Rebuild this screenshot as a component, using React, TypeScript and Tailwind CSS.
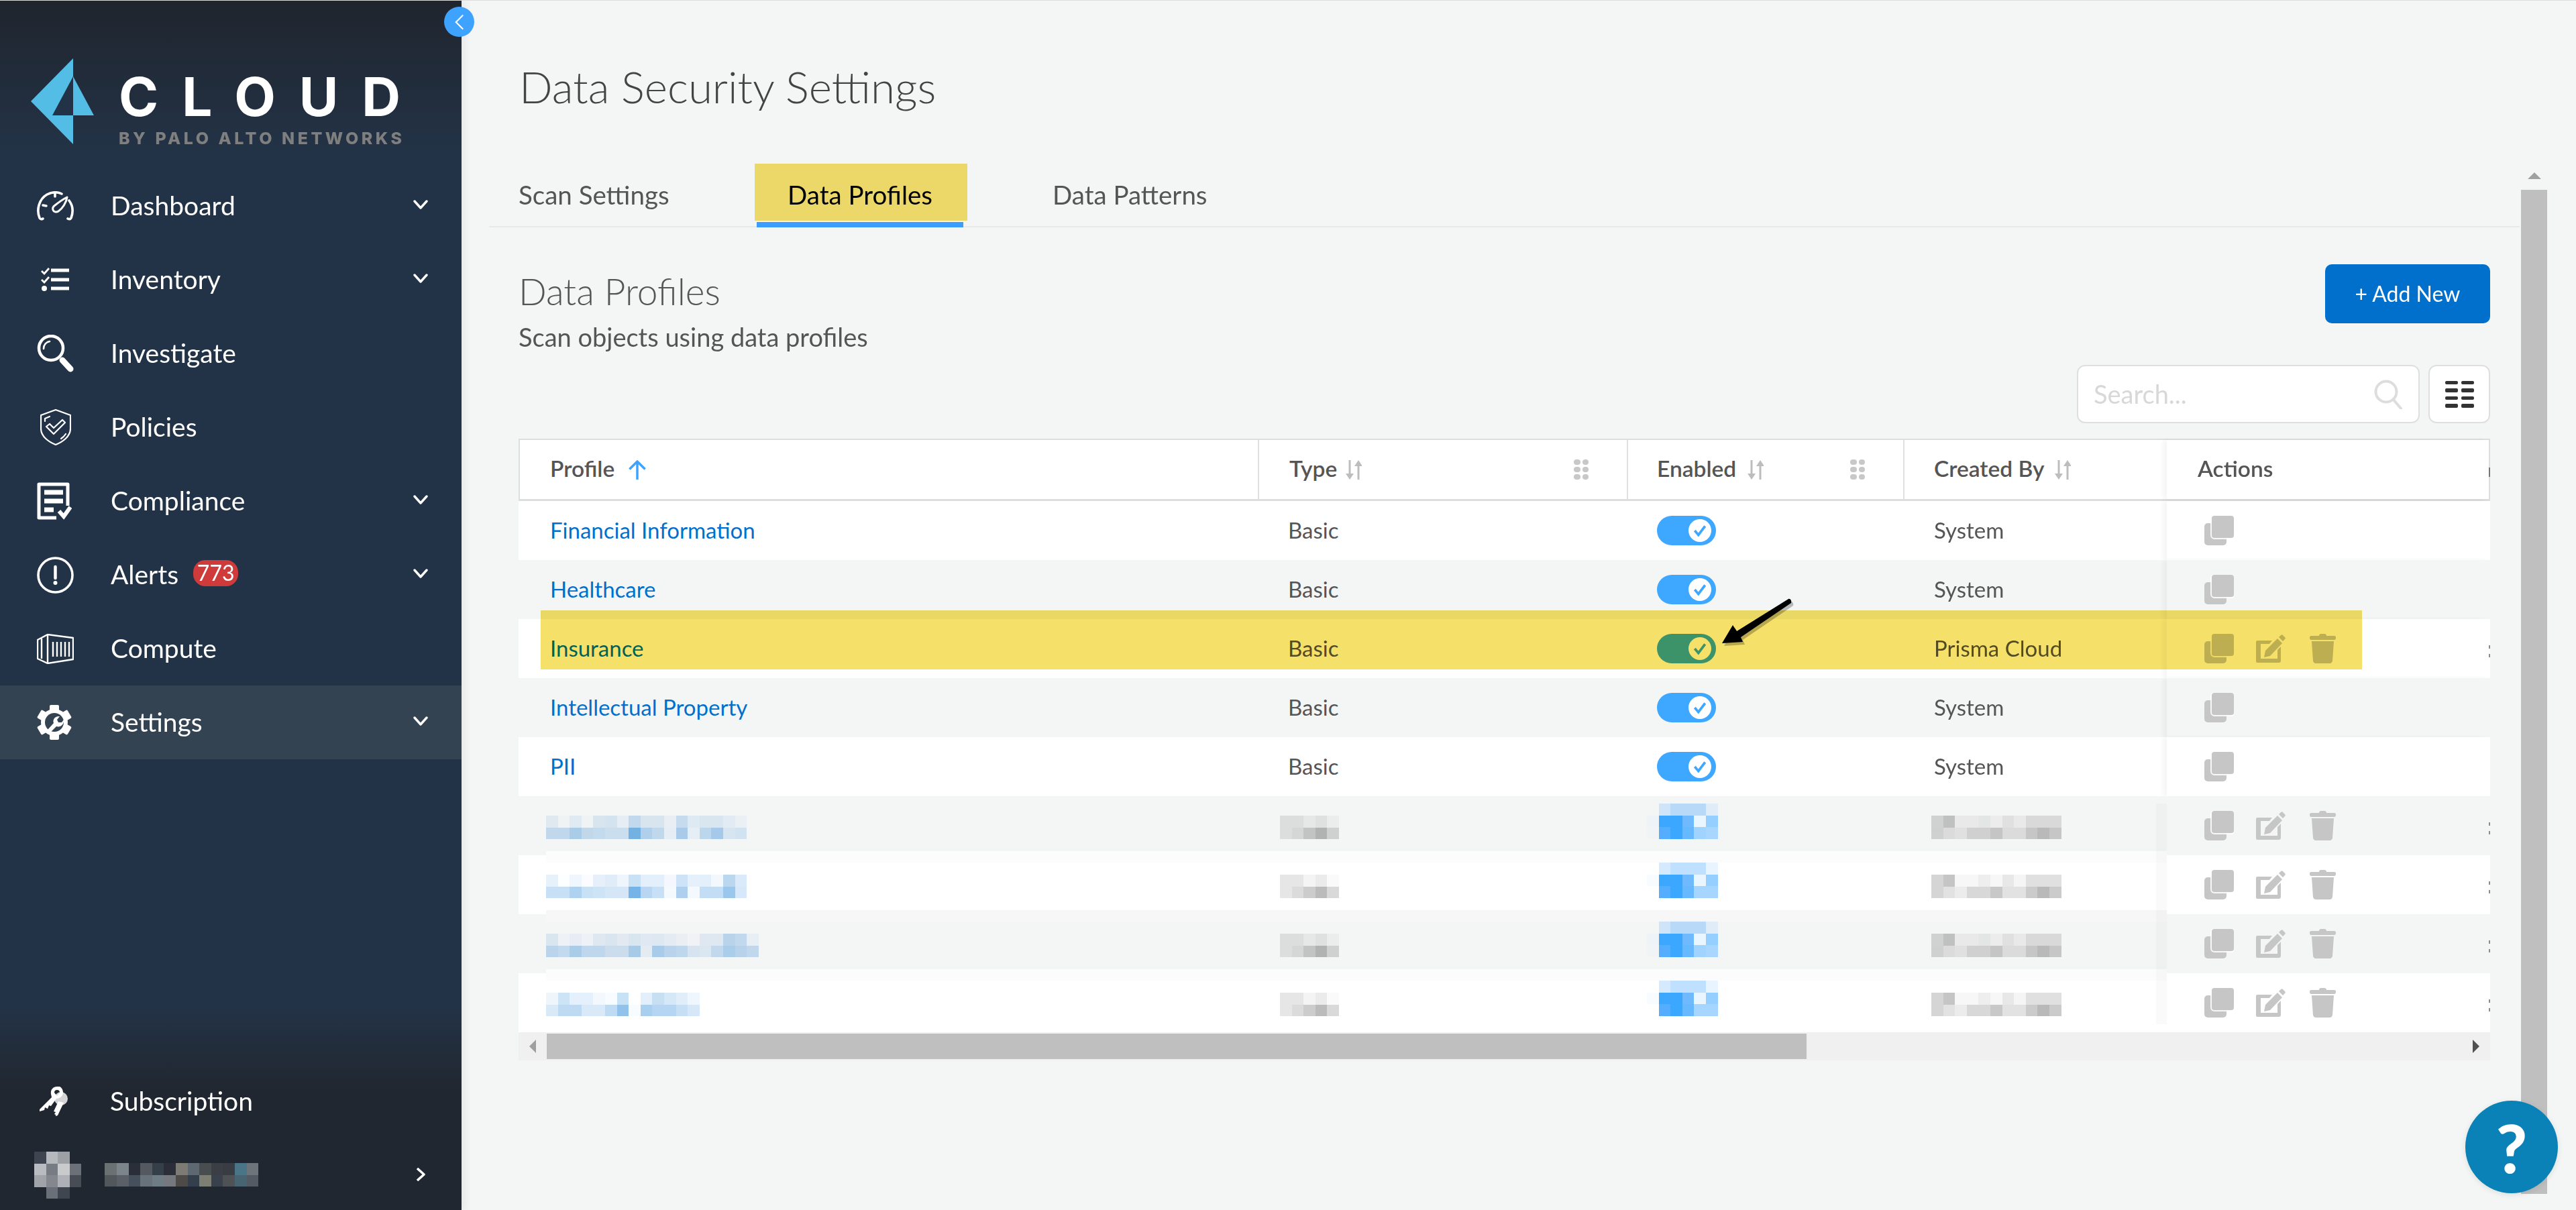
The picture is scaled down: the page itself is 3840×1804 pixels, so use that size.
const avatar = [
  ['#3e4550', '#b5b9bd', '#9da1a5', 'transparent'],
  ['#b8bcc0', '#777c84', '#c8cacc', '#6c7179'],
  ['#a0a3a8', '#84878d', '#aeb2b6', '#474c55'],
  ['transparent', '#6b7078', '#3f4650', 'transparent'],
]
const userName = [
  ['#6b7073', '#7d858c', '#2a2e38', '#53595e', '#343f49', '#2b2e38', '#7c7c74', '#5d6870', '#484d50', '#3b3f45', '#3a3c43', '#4a7488', '#6d747c'],
  ['#52575b', '#5b6068', '#46505c', '#68727b', '#6e7c86', '#75797f', '#4d4a47', '#33404c', '#7d7e74', '#39424c', '#4f5254', '#466472', '#535a64'],
]

const typeShaded = [
  ['#dcdedd', '#dcdedd', '#e6e8e7', '#dfe1e0', '#ebeded'],
  ['#dcdedd', '#d5d7d6', '#c2c4c3', '#b1b3b2', '#cfd1d0'],
]
const typeWhite = [
  ['#e6e6e6', '#e6e6e6', '#f4f4f4', '#ebebeb', '#fafafa'],
  ['#e6e6e6', '#dbdbdb', '#cccccc', '#bbbbbb', '#d9d9d9'],
]
const enabledShaded = [
  ['transparent', '#cfe4f8', '#b8daf8', '#b8daf8', '#b8daf8', '#e0ecf8'],
  ['#eef3f8', '#3ba7ff', '#3ba7ff', '#6fbaff', '#e9f6ff', '#94cfff'],
  ['#f0f4f7', '#54adff', '#3ba7ff', '#66b8ff', '#a0d3ff', '#a8d6ff'],
]
const enabledWhite = [
  ['transparent', '#d5eaff', '#bfe0ff', '#bfe0ff', '#bfe0ff', '#e8f4ff'],
  ['#f8fbff', '#3ba7ff', '#3ba7ff', '#6fbaff', '#e9f6ff', '#94cfff'],
  ['#ffffff', '#54adff', '#3ba7ff', '#66b8ff', '#a6d6ff', '#a6d6ff'],
]
const createdShaded = [
  ['#d0d2d1', '#bfc0c0', '#e8e9e8', '#e8e9e8', '#e4e5e5', '#ececec', '#dfe0df', '#e8e9e8', '#d8d9d8', '#d8d9d8', '#d8d9d8'],
  ['#cfd1d0', '#dadbda', '#dfe0df', '#cfd0cf', '#cfd0cf', '#c4c5c4', '#dadbda', '#dadbda', '#c5c6c5', '#b8b9b8', '#c5c6c5'],
]
const createdWhite = [
  ['#d5d5d5', '#c5c5c5', '#f7f7f7', '#f7f7f7', '#eeeeee', '#f7f7f7', '#e8e8e8', '#f5f5f5', '#e0e0e0', '#e0e0e0', '#e0e0e0'],
  ['#d5d5d5', '#e2e2e2', '#ececec', '#d8d8d8', '#d8d8d8', '#c8c8c8', '#e2e2e2', '#e2e2e2', '#cbcbcb', '#b9b9b9', '#cbcbcb'],
]

const blurredRows = [
  {
    name: [
      ['#e0e9f0', '#f0f3f4', '#e0eaf2', '#f0f3f4', '#d8e5ee', '#d3e3ef', '#e6edf5', '#c2d8ec', '#d8e5ef', '#d8e5ef', '#e8eef4', '#c6dbee', '#deeaf3', '#d9e6ef', '#d9e6ef', '#e2ebf3', '#ebf0f5'],
      ['#c0d7ec', '#c0d7ec', '#a9cce8', '#c2d8e9', '#c4dbed', '#cadeee', '#cadeee', '#74b1e3', '#afcfea', '#c0d8ec', '#e6eef5', '#a9cbe9', '#e6eef5', '#bcd7eb', '#a6c9e9', '#d6e5f0', '#d1e2f0'],
    ],
    white: false,
  },
  {
    name: [
      ['#e6f1fa', '#fdfeff', '#f0f6fe', '#fbfcff', '#e6effa', '#e0ecf8', '#eef5fd', '#c9e1f5', '#e3effb', '#e3effb', '#f4f8fe', '#cee3f7', '#e5f0fb', '#e3effb', '#f3f8fe', '#bbd7f0', '#daeafa'],
      ['#c7e0f5', '#c7e0f5', '#afd2f0', '#c9e1f5', '#cde3f6', '#d5e6f7', '#d5e6f7', '#76b3e7', '#b8d6f2', '#c7e0f5', '#f4f9fe', '#aed0ee', '#f4f9ff', '#c3def4', '#c3def4', '#9cc7ec', '#d6e8fa'],
    ],
    white: true,
    band: 'bg-[#fbfcfb]',
  },
  {
    name: [
      ['#d9e6f0', '#eef1f6', '#e8ecf5', '#eef1f6', '#dfe8f1', '#d9e6ef', '#e3e9f1', '#d9e6ef', '#e0e9f3', '#dde8f1', '#e5ebf2', '#ebeff3', '#f0f2f5', '#dfe8f1', '#dfe8f1', '#b8d3ea', '#c2d8ec', '#e8eff4'],
      ['#bbd4eb', '#c3d9ed', '#a9cce9', '#bfd7ec', '#bfd7ec', '#cbddec', '#cbddec', '#a7cbe6', '#e5ecf1', '#a7cbe9', '#b9d3ea', '#bfd7ec', '#d7e4f0', '#dbe7f0', '#c2d8ec', '#aacde9', '#b7d2ea', '#c1d7ec'],
    ],
    white: false,
    band: 'bg-[#f7f7f7]',
  },
  {
    name: [
      ['#eef5fb', '#cde3f6', '#e4f0fb', '#e4f0fb', '#f3f8fd', '#f8fbff', '#c7e1f5', '#ffffff', '#e3f0fb', '#c6dff3', '#d5e8f7', '#e1eefa', '#eff6fd'],
      ['#d8e9f8', '#bddaf2', '#bddaf2', '#d9e9f8', '#d9e9f8', '#bfdaf3', '#92c2ea', '#f9fcff', '#a9cfee', '#b6d5f2', '#b6d5f2', '#c6dff5', '#d6e7f8'],
    ],
    white: true,
    band: 'bg-[#fbfcfb]',
  },
]

const plainRows = [
  { name: 'Financial Information', by: 'System', white: true },
  { name: 'Healthcare', by: 'System', white: false },
  { name: 'Insurance', by: 'Prisma Cloud', white: true, custom: true },
  { name: 'Intellectual Property', by: 'System', white: false },
  { name: 'PII', by: 'System', white: true },
]

function Mosaic({ rows, cell = 17.6, rowHeight = 17.6 }: { rows: string[][]; cell?: number; rowHeight?: number }) {
  return (
    <div className="flex flex-col">
      {rows.map((row, i) => (
        <div key={i} className="flex">
          {row.map((c, j) => (
            <div key={j} style={{ width: cell, height: rowHeight, background: c }} />
          ))}
        </div>
      ))}
    </div>
  )
}

function Chevron() {
  return (
    <svg viewBox="0 0 22 14" className="w-[22px] h-[14px] mb-[4px]" fill="none" stroke="#fff" strokeWidth="3.4" strokeLinecap="round" strokeLinejoin="round">
      <path d="M2 2l9 10 9-10" />
    </svg>
  )
}

function GaugeIcon() {
  return (
    <svg viewBox="0 0 55 44" className="w-[55px] h-[44px]" fill="none" stroke="#fff" strokeWidth="3.6" strokeLinecap="round">
      <path d="M9 41c-1 1-4 1-5-1C-1 28 3 12 15 5c8-4 16-4 22-1" />
      <path d="M48 14c6 8 6 18 3 26-1 2-3 2-5 1" />
      <path d="M27 2v6M9 21l5 1" />
      <path d="M45 9c-1 8-7 17-13 21-3 2-7 1-8-2-1-3 0-5 3-7 5-4 12-9 18-12z" strokeWidth="3" strokeLinejoin="round" />
    </svg>
  )
}

function ListIcon() {
  return (
    <svg viewBox="0 0 42 36" className="w-[42px] h-[36px]" fill="none" stroke="#fff">
      <path d="M1 5l4 4 7-8M1 18l4 4 7-8" strokeWidth="2.8" />
      <path d="M15 4h27M15 18h27M15 31h27" strokeWidth="5" />
      <circle cx="5" cy="31" r="4" fill="#fff" stroke="none" />
    </svg>
  )
}

function SearchNavIcon() {
  return (
    <svg viewBox="0 0 55 56" className="w-[55px] h-[56px]" fill="none" stroke="#fff">
      <circle cx="21" cy="20" r="18" strokeWidth="4.5" />
      <path d="M10 21c0-6 4-10 9-11" strokeWidth="2.6" strokeLinecap="round" />
      <path d="M38 38l12 13" strokeWidth="9" strokeLinecap="round" />
    </svg>
  )
}

function ShieldIcon() {
  return (
    <svg viewBox="0 0 46 54" className="w-[46px] h-[54px]" fill="none" stroke="#fff" strokeWidth="2.2" strokeLinecap="round" strokeLinejoin="round">
      <path d="M23 1l22 8v20c0 12-12 20-22 24C13 49 1 41 1 29V9z" />
      <path d="M7 18v-4l7-3M38 37c-2 3-4 5-7 7" />
      <path d="M9 26l5-4 6 6 13-12 4 4-17 17z" />
    </svg>
  )
}

function ComplianceIcon() {
  return (
    <svg viewBox="0 0 52 56" className="w-[52px] h-[56px]" fill="none" stroke="#fff">
      <path d="M29 53H3V3h43v32" strokeWidth="5" strokeLinejoin="round" />
      <path d="M11 15h28M11 28h28M11 41h14" strokeWidth="7" />
      <path d="M33 43l7 8 10-14" strokeWidth="6" />
    </svg>
  )
}

function AlertIcon() {
  return (
    <svg viewBox="0 0 55 55" className="w-[55px] h-[55px]" fill="none" stroke="#fff">
      <circle cx="27.5" cy="27.5" r="25.5" strokeWidth="3.6" />
      <path d="M27.5 15v17" strokeWidth="4.5" strokeLinecap="round" />
      <circle cx="27.5" cy="39" r="3" fill="#fff" stroke="none" />
    </svg>
  )
}

function ContainerIcon() {
  return (
    <svg viewBox="0 0 55 45" className="w-[55px] h-[45px]" fill="none" stroke="#fff" strokeWidth="2.4">
      <path d="M1 9l15-8 38 5v32l-38 6-15-7z" strokeLinejoin="round" />
      <path d="M16 1v43M7 7v30M24 12v22M30 12v22M36 12v22M42 12v22M48 12v22" />
    </svg>
  )
}

function GearIcon() {
  return (
    <svg viewBox="0 0 52 52" className="w-[52px] h-[52px]">
      <g fill="#fff">
        <circle cx="26" cy="26" r="20" />
        <rect x="19" y="0" width="14" height="10" rx="2" />
        <rect x="19" y="42" width="14" height="10" rx="2" />
        <rect x="19" y="0" width="14" height="10" rx="2" transform="rotate(60 26 26)" />
        <rect x="19" y="42" width="14" height="10" rx="2" transform="rotate(60 26 26)" />
        <rect x="19" y="0" width="14" height="10" rx="2" transform="rotate(120 26 26)" />
        <rect x="19" y="42" width="14" height="10" rx="2" transform="rotate(120 26 26)" />
      </g>
      <circle cx="26" cy="26" r="14" fill="#344352" />
      <path d="M16 37l9-10c-2-5 2-11 9-10l-4 5 2 4 5 0 3-4c1 7-5 12-11 10l-9 9z" fill="#fff" />
    </svg>
  )
}

function KeysIcon() {
  return (
    <svg viewBox="0 0 44 44" className="w-[44px] h-[44px]">
      <circle cx="32" cy="18" r="10" fill="#d5d5d5" />
      <path d="M28 22l-7 15 3 1-2 3 2 1v2l3-1 9-19z" fill="#fff" />
      <path d="M26 0c-6 0-10 5-9 11l1 5L0 34v3l7-2 1-4 4 2 2-5 3 1 8-11c5 0 10-4 10-9 0-6-4-10-9-10zm0 5a4 4 0 0 1 4 4l-4 5-4-5a4 4 0 0 1 4-4z" fill="#fff" />
    </svg>
  )
}

function SortIcon() {
  return (
    <svg viewBox="0 0 25 29" className="w-[25px] h-[29px]" fill="none" stroke="#bdbdbd" strokeWidth="3">
      <path d="M7 0v24M20 5v24" />
      <path d="M1 20h12l-6 9zM14 9h12l-6-9z" fill="#bdbdbd" stroke="none" />
    </svg>
  )
}

function GripIcon() {
  return (
    <div className="grid grid-cols-2 gap-x-[3px] gap-y-[3px] w-[22px]">
      {[0, 1, 2, 3, 4, 5].map((i) => (
        <div key={i} className="h-[8px] rounded-[4px] bg-[#c8c8c8]" />
      ))}
    </div>
  )
}

function CopyIcon() {
  return (
    <svg viewBox="0 0 44 44" className="w-[44px] h-[44px]">
      <rect x="0" y="11" width="33" height="33" rx="5" fill="#c6c6c6" />
      <rect x="9" y="-2" width="37" height="37" rx="6" fill="#fff" opacity="0.85" />
      <rect x="11" y="0" width="33" height="33" rx="4" fill="#c6c6c6" />
    </svg>
  )
}

function EditIcon() {
  return (
    <svg viewBox="0 0 44 42" className="w-[44px] h-[42px]">
      <path d="M2 9h22l-4 5H7v22h25V23l5-5v21a3 3 0 0 1-3 3H2a2 2 0 0 1-2-2V11a2 2 0 0 1 2-2z" fill="#c6c6c6" />
      <path d="M32 6l7 7-18 19-9 2 2-10zM34 4l3-3c1-1 2-1 3 0l3 3c1 1 1 2 0 3l-3 3z" fill="#c6c6c6" />
    </svg>
  )
}

function TrashIcon() {
  return (
    <svg viewBox="0 0 39 44" className="w-[39px] h-[44px]">
      <path d="M14 3c0-2 1-3 3-3h5c2 0 3 1 3 3h12c1 0 2 1 2 2v1c0 2-1 3-2 3H2C1 9 0 8 0 6V5c0-1 1-2 2-2z" fill="#c6c6c6" />
      <path d="M3 11h33l-2 29c0 2-2 4-4 4H9c-2 0-4-2-4-4z" fill="#c6c6c6" />
    </svg>
  )
}

function Toggle() {
  return (
    <div className="w-[88px] h-[44px] rounded-full bg-[#3ea7ff] flex items-center justify-end pr-[7px]">
      <div className="w-[34px] h-[34px] rounded-full bg-white flex items-center justify-center">
        <svg viewBox="0 0 20 20" className="w-[22px] h-[22px]" fill="none" stroke="#3ea7ff" strokeWidth="3.4">
          <path d="M3 10l5 6 9-12" />
        </svg>
      </div>
    </div>
  )
}

function Actions({ full }: { full?: boolean }) {
  return (
    <div className="flex items-center">
      <CopyIcon />
      {full && (
        <>
          <div className="ml-[33px]"><EditIcon /></div>
          <div className="ml-[36px]"><TrashIcon /></div>
        </>
      )}
    </div>
  )
}

function ClippedDots() {
  return (
    <div className="absolute right-0 top-[39px] flex flex-col gap-[8px]">
      <div className="w-[2px] h-[5px] bg-[#8c8c8c]" />
      <div className="w-[2px] h-[5px] bg-[#8c8c8c]" />
    </div>
  )
}

const navItems = [
  { label: 'Dashboard', icon: <GaugeIcon />, chevron: true },
  { label: 'Inventory', icon: <ListIcon />, chevron: true, inset: 6 },
  { label: 'Investigate', icon: <SearchNavIcon />, chevron: false },
  { label: 'Policies', icon: <ShieldIcon />, chevron: false, inset: 5 },
  { label: 'Compliance', icon: <ComplianceIcon />, chevron: true },
  { label: 'Alerts', icon: <AlertIcon />, chevron: true, badge: '773' },
  { label: 'Compute', icon: <ContainerIcon />, chevron: false },
  { label: 'Settings', icon: <GearIcon />, chevron: true, active: true },
]

function Sidebar() {
  return (
    <aside className="relative w-[688px] h-[1804px] shrink-0 flex flex-col text-white bg-[linear-gradient(180deg,#20252e_0%,#233347_13%,#233347_83%,#212730_90%,#212730_100%)] shadow-[6px_0_10px_rgba(0,0,0,0.05)]">
      {/* collapse button */}
      <div className="absolute left-[662px] top-[9px] w-[45px] h-[45px] rounded-full bg-[#3ea2ff] flex items-center justify-center">
        <svg viewBox="0 0 16 26" className="w-[14px] h-[24px]" fill="none" stroke="#fff" strokeWidth="2.4">
          <path d="M14 1L2 13l12 12" />
        </svg>
      </div>

      {/* logo */}
      <div className="h-[251px] shrink-0 flex items-start pl-[46px] pt-[86px]">
        <svg viewBox="0 0 94 128" className="w-[94px] h-[128px] shrink-0">
          <path d="M63 0L0 64l63 64z" fill="#54bde6" />
          <path d="M63 27L32 85h31z" fill="#233347" />
          <path d="M63 27l31 58H63z" fill="#54bde6" />
        </svg>
        <div className="ml-[37px] mt-[13px]">
          <div className="font-['Inter',sans-serif] font-bold text-[80px] leading-[88px] tracking-[35px] whitespace-nowrap">CLOUD</div>
          <div className="font-['Inter',sans-serif] font-extrabold text-[25px] leading-[30px] tracking-[4.5px] text-[#7f7f7f] whitespace-nowrap mt-[3px]">BY PALO ALTO NETWORKS</div>
        </div>
      </div>

      <nav className="flex flex-col">
        {navItems.map((item) => (
          <div key={item.label} className={`h-[110px] flex items-center pl-[55px] pr-[50px] ${item.active ? 'bg-[#344352]' : ''}`}>
            <div className="w-[110px] shrink-0 flex items-center" style={{ paddingLeft: item.inset ?? 0 }}>{item.icon}</div>
            <span className="text-[39px] leading-[50px] -mt-[2px]">{item.label}</span>
            {item.badge && (
              <span className="ml-[22px] -mt-[6px] w-[67px] h-[39px] rounded-[18px] bg-[#cf3a3b] text-[32px] leading-[37px] text-center">{item.badge}</span>
            )}
            {item.chevron && <div className="ml-auto"><Chevron /></div>}
          </div>
        ))}
      </nav>

      <div className="mt-auto">
        <div className="h-[108px] flex items-center pl-[59px]">
          <div className="w-[105px] shrink-0"><KeysIcon /></div>
          <span className="text-[39px] leading-[50px] -mt-[2px]">Subscription</span>
        </div>
        <div className="h-[109px] flex items-start pl-[51px] pt-[21px] pr-[53px]">
          <Mosaic rows={avatar} />
          <div className="ml-[35px] mt-[17px]"><Mosaic rows={userName} /></div>
          <svg viewBox="0 0 15 20" className="w-[15px] h-[20px] ml-auto mt-[24px]" fill="none" stroke="#fff" strokeWidth="3.6" strokeLinejoin="round">
            <path d="M2 1l10 9-10 9" />
          </svg>
        </div>
      </div>
    </aside>
  )
}

function TableHeader() {
  return (
    <div className="h-[93px] flex bg-white border-2 border-b-[3px] border-[#dcdedd] text-[33.5px] font-semibold text-[#555] relative">
      <div className="w-[1100px] shrink-0 flex items-center pl-[45px] gap-[20px]">
        <span className="-mt-[3px]">Profile</span>
        <svg viewBox="0 0 28 30" className="w-[28px] h-[29px]" fill="none" stroke="#3ea2ff" strokeWidth="3.6" strokeLinejoin="round">
          <path d="M14 30V3M2 14L14 2l12 12" />
        </svg>
      </div>
      <div className="w-[550px] shrink-0 flex items-center pl-[45px] pr-[57px] border-l-2 border-[#e0e0e0]">
        <span className="-mt-[3px]">Type</span>
        <div className="ml-[12px]"><SortIcon /></div>
        <div className="ml-auto"><GripIcon /></div>
      </div>
      <div className="w-[412px] shrink-0 flex items-center pl-[43px] pr-[57px] border-l-2 border-[#e0e0e0]">
        <span className="-mt-[3px]">Enabled</span>
        <div className="ml-[16px]"><SortIcon /></div>
        <div className="ml-auto"><GripIcon /></div>
      </div>
      <div className="w-[393px] shrink-0 flex items-center pl-[44px] border-l-2 border-[#e0e0e0]">
        <span className="-mt-[3px]">Created By</span>
        <div className="ml-[14px]"><SortIcon /></div>
      </div>
      <div className="flex-1 flex items-center pl-[46px] shadow-[-6px_0_6px_rgba(0,0,0,0.04)]">
        <span className="-mt-[3px]">Actions</span>
      </div>
      <div className="absolute -right-[2px] top-[41px] w-[2px] h-[14px] bg-[#777]" />
    </div>
  )
}

function ProfileTable() {
  return (
    <div className="relative">
      <TableHeader />

      {plainRows.map((row) => (
        <div key={row.name} className={`relative h-[88px] flex items-center text-[33px] text-[#555] ${row.white ? 'bg-white' : 'bg-[#f4f6f5]'}`}>
          <div className="w-[1102px] shrink-0 pl-[47px] text-[#0170cc]">{row.name}</div>
          <div className="w-[550px] shrink-0 pl-[45px]">Basic</div>
          <div className="w-[412px] shrink-0 pl-[45px]"><Toggle /></div>
          <div className="w-[393px] shrink-0 pl-[46px]">{row.by}</div>
          <div className="flex-1 h-full flex items-center pl-[56px] shadow-[-6px_0_6px_rgba(0,0,0,0.04)]">
            <Actions full={row.custom} />
          </div>
          {row.custom && <ClippedDots />}
        </div>
      ))}

      {blurredRows.map((row, i) => (
        <div key={i} className={`relative h-[88px] flex items-start ${row.white ? 'bg-white' : 'bg-[#f4f6f5]'}`}>
          <div className="w-[1102px] shrink-0 pl-[41px] pt-[29px]"><Mosaic rows={row.name} /></div>
          <div className="w-[550px] shrink-0 pl-[33px] pt-[29px]"><Mosaic rows={row.white ? typeWhite : typeShaded} /></div>
          <div className="w-[412px] shrink-0 pl-[30px] pt-[11px]"><Mosaic rows={row.white ? enabledWhite : enabledShaded} /></div>
          <div className="w-[393px] shrink-0 pl-[42px] pt-[29px]"><Mosaic rows={row.white ? createdWhite : createdShaded} /></div>
          <div className="flex-1 h-full flex items-center pl-[56px]">
            <Actions full />
          </div>
          <ClippedDots />
          {row.band && <div className={`absolute left-[41px] -top-[6px] w-[2416px] h-[17px] ${row.band}`} />}
        </div>
      ))}

      {/* pixelated strip left of the sticky column */}
      <div className="absolute left-[2441px] top-[544px] w-[16px] h-[329px] bg-black/[0.02]" />

      {/* horizontal scrollbar */}
      <div className="h-[42px] flex items-center bg-[#f1f0f0]">
        <div className="w-[42px] shrink-0 flex items-center justify-center">
          <div className="w-0 h-0 border-y-[10px] border-y-transparent border-r-[10px] border-r-[#a0a0a0]" />
        </div>
        <div className="w-[1878px] h-[38px] bg-[#bfbfbf]" />
        <div className="ml-auto mr-[16px] w-0 h-0 border-y-[10px] border-y-transparent border-l-[10px] border-l-[#505050]" />
      </div>

      {/* yellow marker over the Insurance row */}
      <div className="absolute left-[33px] top-[256px] w-[2715px] h-[88px] bg-[#f5e069] mix-blend-multiply" />

      {/* annotation arrow */}
      <svg viewBox="0 0 112 76" className="absolute left-[1790px] top-[238px] w-[112px] h-[76px]">
        <path d="M4 67L20 40l6 9L103 1c3-1 5 3 4 6L32 58l3 7z" fill="#000" opacity="0.25" transform="translate(3 4)" />
        <path d="M4 67L20 40l6 9L103 1c3-1 5 3 4 6L32 58l3 7z" fill="#000" />
      </svg>
    </div>
  )
}

export default function App() {
  return (
    <div className="relative w-[3840px] h-[1804px] overflow-hidden flex bg-[#f4f6f5] font-['Lato','Liberation_Sans',sans-serif] border-t border-[#dddddd]">
      <Sidebar />

      <main className="flex-1 relative">
        <div className="ml-[85px] w-[2939px] flex flex-col">
          <h1 className="pt-[83px] h-[243px] text-[65.5px] leading-[90px] font-light text-[#444] pl-[1px]">Data Security Settings</h1>

          {/* tabs */}
          <div className="relative h-[95px] -ml-[44px] w-[3027px] pl-[44px] flex items-start border-b-2 border-[#e8eaea] text-[38.5px] text-[#555]">
            <div className="w-[355px] h-[93px] pt-[21px] leading-[50px]">Scan Settings</div>
            <div className="relative w-[308px] h-[95px] pt-[21px] leading-[50px] text-center text-black">
              <div className="absolute -left-[3px] top-0 w-[317px] h-[85px] bg-[#f7e06d] mix-blend-multiply" />
              <span className="relative">Data Profiles</span>
              <div className="absolute left-0 top-[87px] w-full h-[8px] bg-[#3c9efc]" />
            </div>
            <div className="ml-[133px] pt-[21px] leading-[50px]">Data Patterns</div>
          </div>

          {/* section heading */}
          <div className="h-[150px] mt-[55px] flex justify-between items-start">
            <div>
              <h2 className="text-[55px] leading-[70px] font-light text-[#555] mt-[5px]">Data Profiles</h2>
              <p className="text-[38px] leading-[50px] text-[#555] mt-[8px]">Scan objects using data profiles</p>
            </div>
            <button className="w-[246px] h-[88px] rounded-[10px] bg-[#0170cc] text-white text-[32px]">+ Add New</button>
          </div>

          {/* toolbar */}
          <div className="h-[87px] flex justify-end gap-[13px] mb-[23px]">
            <div className="w-[511px] h-full rounded-[12px] border-2 border-[#dfdfdf] bg-white flex items-center pl-[23px] pr-[22px]">
              <span className="text-[38px] text-[#d8d8d8]">Search...</span>
              <svg viewBox="0 0 44 44" className="w-[44px] h-[44px] ml-auto" fill="none" stroke="#dddddd">
                <circle cx="18" cy="18" r="15.5" strokeWidth="4" />
                <path d="M29 30l11 13" strokeWidth="4" strokeLinecap="round" />
              </svg>
            </div>
            <div className="w-[92px] h-full rounded-[12px] border-2 border-[#dfdfdf] bg-white flex items-center justify-center">
              <div className="grid grid-cols-2 gap-x-[5px] gap-y-[6px]">
                {[0, 1, 2, 3, 4, 5, 6, 7].map((i) => (
                  <div key={i} className="w-[19px] h-[5.5px] rounded-[2px] bg-[#333]" />
                ))}
              </div>
            </div>
          </div>

          <ProfileTable />
        </div>

        {/* page scrollbar */}
        <div className="absolute left-[3069px] top-[239px] w-[41px] h-[1540px] flex flex-col bg-[#f4f6f5]">
          <div className="h-[43px] flex items-center justify-center">
            <div className="w-0 h-0 border-x-[10px] border-x-transparent border-b-[10px] border-b-[#a0a0a0]" />
          </div>
          <div className="flex-1 mx-[1px] bg-[#bfbfbf]" />
        </div>

        {/* help */}
        <div className="absolute left-[2987px] top-[1640px] w-[138px] h-[138px] rounded-full bg-[#0a82b8] shadow-[0_2px_8px_rgba(0,0,0,0.1)] flex items-center justify-center text-white font-black text-[100px] leading-none">?</div>
      </main>
    </div>
  )
}
